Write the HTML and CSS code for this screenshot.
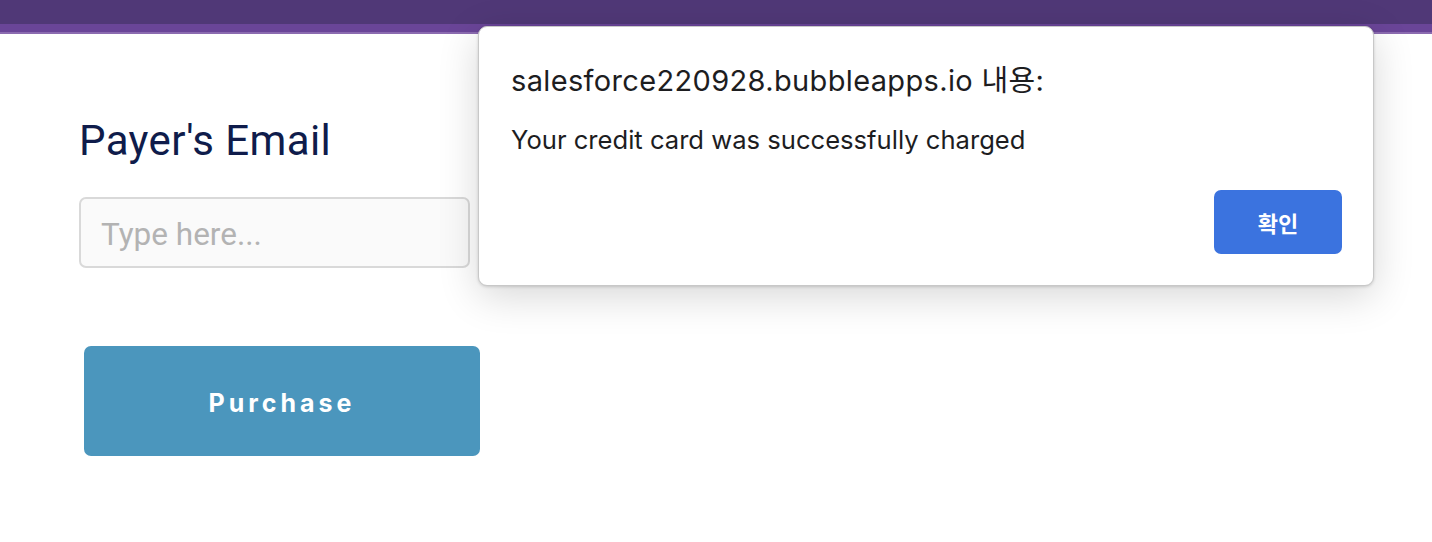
FILE: index.html
```html
<!DOCTYPE html>
<html>
<head>
<meta charset="utf-8">
<link rel="stylesheet" href="styles.css">
</head>
<body>
<header class="topbar">
  <div class="bar-dark"></div>
  <div class="bar-mid"></div>
  <div class="bar-light"></div>
</header>
<main class="form">
  <h1 class="label">Payer's Email</h1>
  <input class="field" type="text" placeholder="Type here...">
  <button class="purchase">Purchase</button>
</main>
<div class="dialog">
  <div class="dialog-title">salesforce220928.bubbleapps.io 내용:</div>
  <div class="dialog-msg">Your credit card was successfully charged</div>
  <div class="dialog-actions">
    <button class="ok">확인</button>
  </div>
</div>
</body>
</html>
```
FILE: styles.css
```css
html, body {
  margin: 0;
  padding: 0;
  background: #ffffff;
  width: 1432px;
  height: 542px;
  overflow: hidden;
}
body {
  font-family: "Inter", "Liberation Sans", "Noto Sans CJK KR", sans-serif;
}
.topbar {
  display: flex;
  flex-direction: column;
}
.bar-dark { height: 24px; background: #503877; }
.bar-mid { height: 8px; background: #6a4598; }
.bar-light { height: 2px; background: #8b6bb0; }

.form {
  display: flex;
  flex-direction: column;
  align-items: flex-start;
  padding: 0 0 0 79px;
}
.label {
  margin: 82px 0 0 0;
  font-family: "Roboto", "Liberation Sans", sans-serif;
  font-weight: 400;
  font-size: 42px;
  line-height: 50px;
  color: #0f1c4b;
  letter-spacing: 0.4px;
}
.field {
  margin-top: 31px;
  box-sizing: border-box;
  width: 391px;
  height: 71px;
  border: 2px solid #d9d9d9;
  border-radius: 7px;
  background: #fafafa;
  padding: 3px 0 0 20px;
  font-family: "Roboto", "Liberation Sans", sans-serif;
  font-size: 31.5px;
  color: #333;
  outline: none;
}
.field::placeholder { color: #b3b3b3; }
.purchase {
  margin: 78px 0 0 5px;
  width: 396px;
  height: 110px;
  border: none;
  border-radius: 7px;
  background: #4b96bd;
  color: #ffffff;
  font-family: "Inter", "Liberation Sans", sans-serif;
  font-weight: 700;
  font-size: 25px;
  letter-spacing: 4px;
  padding: 3px 0 0 0;
}

.dialog {
  position: absolute;
  left: 478px;
  top: 26px;
  width: 896px;
  height: 260px;
  box-sizing: border-box;
  background: #ffffff;
  border: 1px solid #c8c8c8;
  border-radius: 9px;
  box-shadow: 0 10px 40px rgba(0,0,0,0.16), 0 1px 3px rgba(0,0,0,0.15);
  padding: 36px 31px 0 32px;
  display: flex;
  flex-direction: column;
  color: #1d1d1f;
}
.dialog-title {
  font-size: 29px;
  line-height: 36px;
  letter-spacing: 0.35px;
}
.dialog-msg {
  margin-top: 25px;
  font-size: 25.6px;
  line-height: 32px;
}
.dialog-actions {
  display: flex;
  justify-content: flex-end;
  margin-top: 34px;
}
.ok {
  width: 128px;
  height: 64px;
  border: none;
  border-radius: 7px;
  background: #3b73df;
  color: #ffffff;
  font-family: "Noto Sans CJK KR", sans-serif;
  font-weight: 700;
  font-size: 22px;
}
```
